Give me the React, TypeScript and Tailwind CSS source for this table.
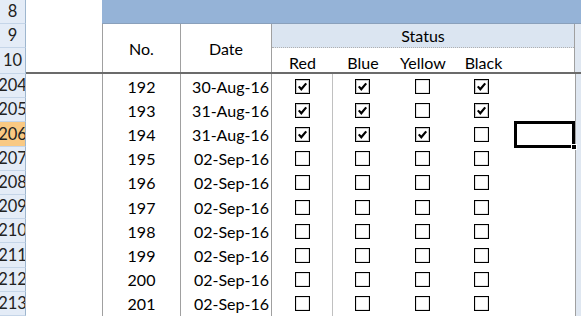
import React from 'react';

type Row = {
  head: number;
  no: number;
  date: string;
  checks: boolean[];
};

const rows: Row[] = [
  { head: 204, no: 192, date: '30-Aug-16', checks: [true, true, false, true] },
  { head: 205, no: 193, date: '31-Aug-16', checks: [true, true, false, true] },
  { head: 206, no: 194, date: '31-Aug-16', checks: [true, true, true, false] },
  { head: 207, no: 195, date: '02-Sep-16', checks: [false, false, false, false] },
  { head: 208, no: 196, date: '02-Sep-16', checks: [false, false, false, false] },
  { head: 209, no: 197, date: '02-Sep-16', checks: [false, false, false, false] },
  { head: 210, no: 198, date: '02-Sep-16', checks: [false, false, false, false] },
  { head: 211, no: 199, date: '02-Sep-16', checks: [false, false, false, false] },
  { head: 212, no: 200, date: '02-Sep-16', checks: [false, false, false, false] },
  { head: 213, no: 201, date: '02-Sep-16', checks: [false, false, false, false] },
];

const colours = ['Red', 'Blue', 'Yellow', 'Black'];
const colWidths = ['w-[61px]', 'w-[60px]', 'w-[60px]', 'w-[61px]'];

const RowHead = ({ label, h, active }: { label: string | number; h: string; active?: boolean }) => (
  <div
    className={`${h} w-[26px] shrink-0 flex items-center justify-center overflow-hidden border-r border-b border-r-[#9eb6ce] border-b-[#c5d5e8] text-[16.5px] ${
      active ? 'bg-[#f9c983] text-[#222]' : 'bg-[#e4ecf7] text-[#222]'
    }`}
  >
    <span className="whitespace-nowrap">{label}</span>
  </div>
);

const CheckBox = ({ checked }: { checked: boolean }) => (
  <svg width="15" height="15" viewBox="0 0 15 15">
    <rect x="0.5" y="0.5" width="14" height="14" fill="white" stroke="#000" strokeWidth="1.2" />
    {checked && (
      <>
        <rect x="1.5" y="1.5" width="12" height="12" fill="none" stroke="#c8c8c8" strokeWidth="1" />
        <path d="M3.8 7.4 L6.3 10.3 L11.2 4.4" fill="none" stroke="#000" strokeWidth="2.2" strokeLinejoin="miter" />
      </>
    )}
  </svg>
);

const App = () => {
  return (
    <div className="w-[581px] h-[317px] overflow-hidden bg-white text-[16px] text-black font-['Lato','Liberation_Sans',sans-serif]">
      {/* row 8: title band */}
      <div className="flex h-[24px]">
        <RowHead label={8} h="h-[24px]" />
        <div className="w-[76px] shrink-0" />
        <div className="flex-1 bg-[#95b3d7] border-b border-[#8aa0bb]" />
      </div>

      {/* rows 9-10: table header */}
      <div className="flex h-[50px]">
        <div className="flex flex-col">
          <RowHead label={9} h="h-[24px]" />
          <RowHead label={10} h="h-[26px]" />
        </div>
        <div className="w-[76px] shrink-0 border-b-2 border-[#6b6b6b]" />
        <div className="flex flex-1 border-b-2 border-[#6b6b6b]">
          <div className="w-[78px] shrink-0 border-l border-[#a0a0a0] flex items-center justify-center pt-[2px]">No.</div>
          <div className="w-[91px] shrink-0 border-l border-[#a0a0a0] flex items-center justify-center pt-[2px]">Date</div>
          <div className="w-[303px] shrink-0 border-l border-[#a0a0a0] flex flex-col">
            <div className="h-[24px] pt-[1px] bg-[#dbe5f1] border-b border-dotted border-[#b0b0b0] flex items-center justify-center">
              Status
            </div>
            <div className="flex flex-1 items-center pt-[3px]">
              {colours.map((c, i) => (
                <div key={c} className={`${colWidths[i]} text-center`}>
                  {c}
                </div>
              ))}
            </div>
          </div>
          <div className="flex-1 border-l border-[#a0a0a0] bg-[#dfe7f1]" />
        </div>
      </div>

      {/* data rows */}
      {rows.map((r) => (
        <div key={r.head} className="flex h-[24.2px]">
          <RowHead label={r.head} h="h-[24.2px]" active={r.head === 206} />
          <div className="w-[76px] shrink-0" />
          <div className="w-[78px] shrink-0 border-l border-[#a0a0a0] flex items-center justify-center pt-[1px]">{r.no}</div>
          <div className="w-[91px] shrink-0 border-l border-[#a0a0a0] flex items-center justify-end pr-[2px] pt-[1px]">
            {r.date}
          </div>
          <div className="w-[61px] shrink-0 border-l border-[#a0a0a0] flex items-center justify-center">
            <CheckBox checked={r.checks[0]} />
          </div>
          <div className="w-[60px] shrink-0 border-l border-[#c0c0c0] flex items-center justify-center">
            <CheckBox checked={r.checks[1]} />
          </div>
          <div className="w-[60px] shrink-0 flex items-center justify-center">
            <CheckBox checked={r.checks[2]} />
          </div>
          <div className="w-[61px] shrink-0 flex items-center justify-center pr-[3px]">
            <CheckBox checked={r.checks[3]} />
          </div>
          <div className="w-[62px] shrink-0 flex items-stretch">
            {r.head === 206 && (
              <div className="relative flex-1 my-[-1px] ml-[1px] border-[3px] border-black">
                <div className="absolute right-[-5px] bottom-[-5px] w-[6px] h-[6px] bg-black border border-white" />
              </div>
            )}
          </div>
          <div className="flex-1 border-l border-[#a0a0a0] bg-[#dfe7f1]" />
        </div>
      ))}
    </div>
  );
};

export default App;
